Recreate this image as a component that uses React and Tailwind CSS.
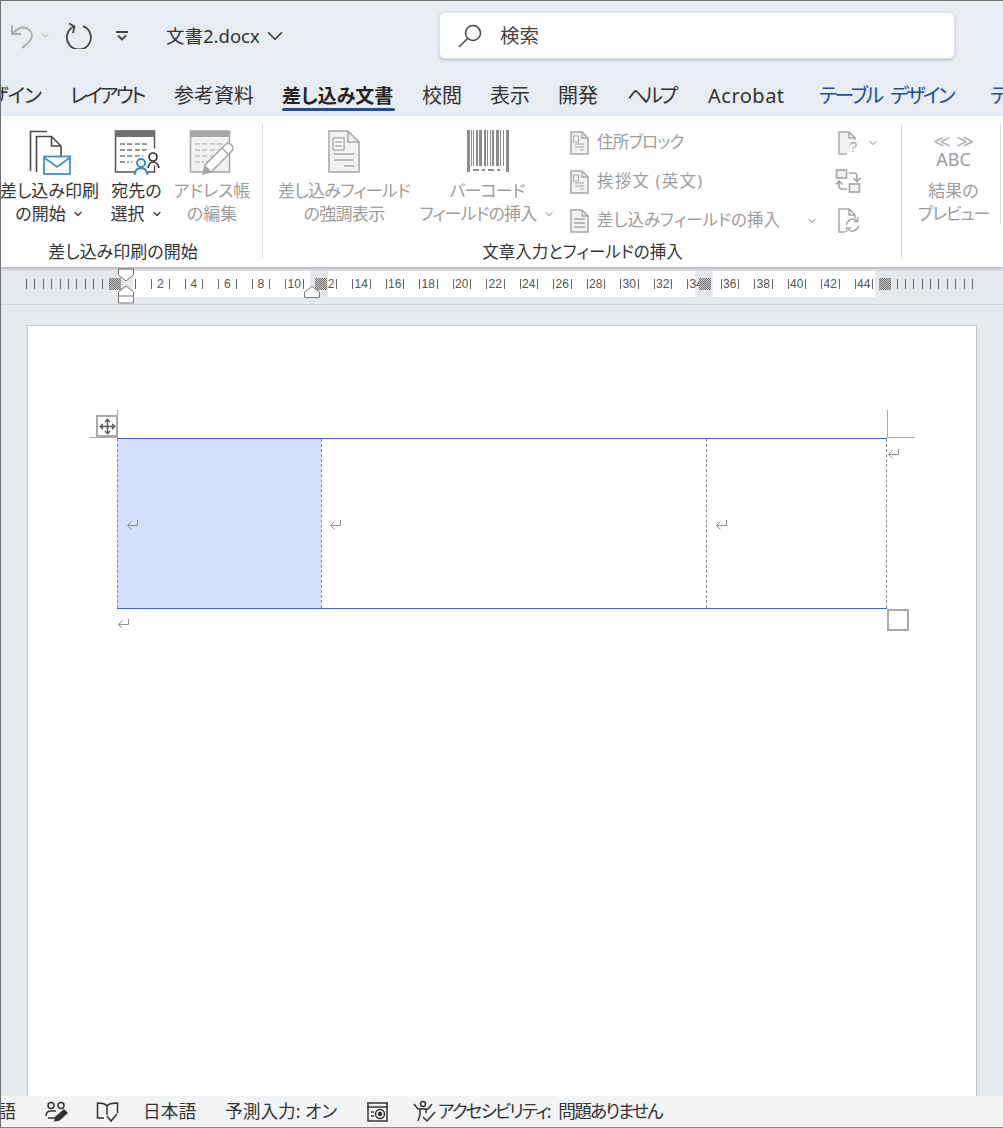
import { ChevronDown, Move } from 'lucide-react';

const TABS = [
    { label: 'ザイン', width: 'w-[40px]', className: 'justify-end tracking-[-1px]' },
    { label: 'レイアウト', width: 'w-[74px]', margin: 'ml-[29px]', className: 'tracking-[-2.7px]' },
    { label: '参考資料', width: 'w-[79px]', margin: 'ml-[30px]' },
    { label: '差し込み文書', width: 'w-[113px]', margin: 'ml-[29px]', active: true, className: 'text-[19px]' },
    { label: '校閲', width: 'w-[39px]', margin: 'ml-[27px]' },
    { label: '表示', width: 'w-[40px]', margin: 'ml-[29px]' },
    { label: '開発', width: 'w-[40px]', margin: 'ml-[28px]' },
    { label: 'ヘルプ', width: 'w-[48px]', margin: 'ml-[29px]', className: 'tracking-[-3px]' },
    { label: 'Acrobat', width: 'w-[76px]', margin: 'ml-[33px]', className: 'tracking-[0.5px]' },
    { label: 'テーブル デザイン', width: 'w-[132px]', margin: 'ml-[35px]', blue: true, className: 'tracking-[-2.6px] [word-spacing:6px]' },
    { label: 'テ', width: 'w-[20px]', margin: 'ml-[39px]', blue: true },
];

const RULER_NUMBERS = [2, 4, 6, 8, 10, 12, 14, 16, 18, 20, 22, 24, 26, 28, 30, 32, 34, 36, 38, 40, 42, 44];
const BAR_WIDTHS = [3, 1, 1, 2, 3, 2, 1, 1, 2, 3, 1, 1, 3];
const BAR_GAPS = [1, 1, 2, 1, 2, 1, 2, 1, 2, 1, 2, 2, 0];

function MailMergeIcon() {
    return (
        <svg width="44" height="46" viewBox="0 0 44 46" fill="none">
            <path d="M19 1.5H2.5V41" stroke="#4a4a4a" strokeWidth="1.6" />
            <path d="M8.5 42V6.5H23.5L33 16V26M23.5 6.5V16H33" stroke="#4a4a4a" strokeWidth="1.6" />
            <rect x="16" y="26.5" width="26" height="17.5" fill="#fff" stroke="#3a93c9" strokeWidth="1.8" />
            <path d="M16 27.5L29 37L42 27.5" stroke="#3a93c9" strokeWidth="1.8" />
        </svg>
    );
}

function TableLines({ color }) {
    return (
        <path d="M6 14H19M21 14H35M6 20H19M21 20H35M6 26H19M21 26H29M6 32H15M17 32H23" stroke={color} strokeWidth="1.4" strokeDasharray="5 2" />
    );
}

function RecipientsIcon() {
    return (
        <svg width="46" height="46" viewBox="0 0 46 46" fill="none">
            <rect x="1.5" y="1" width="39" height="41" fill="#fff" stroke="#555" strokeWidth="1.5" />
            <rect x="1" y="1" width="40" height="6" fill="#707070" />
            <TableLines color="#777" />
            <circle cx="27" cy="35" r="9" fill="#fff" />
            <circle cx="38" cy="27" r="9" fill="#fff" />
            <circle cx="27" cy="33" r="4" stroke="#2e8bc9" strokeWidth="1.8" />
            <path d="M20.5 45C21 40 24 38 27 38C30 38 33 40 33.5 45" stroke="#2e8bc9" strokeWidth="1.8" />
            <circle cx="39" cy="27" r="4" stroke="#333" strokeWidth="1.7" />
            <path d="M34 38C35 33.5 37 32 39 32C41 32 44 33.5 45 38" stroke="#333" strokeWidth="1.7" />
        </svg>
    );
}

function AddressIcon() {
    return (
        <svg width="46" height="46" viewBox="0 0 46 46" fill="none">
            <rect x="1.5" y="1" width="39" height="41" fill="#f2f2f2" stroke="#a6a6a6" strokeWidth="1.5" />
            <rect x="1" y="1" width="40" height="6" fill="#a6a6a6" />
            <TableLines color="#bdbdbd" />
            <path d="M14 44L16 35L36 15C38 13 40.5 13 42.5 15C44.5 17 44.5 19.5 42.5 21.5L22.5 41.5Z" fill="#fff" stroke="#a6a6a6" strokeWidth="1.5" />
            <path d="M14 44L16 35L22.5 41.5Z" fill="#a6a6a6" />
            <path d="M33 18L39.5 24.5" stroke="#a6a6a6" strokeWidth="1.5" />
        </svg>
    );
}

function HighlightIcon() {
    return (
        <svg width="32" height="43" viewBox="0 0 32 43" fill="none">
            <path d="M1 1H20L31 12V42H1Z" fill="#f2f2f2" stroke="#a6a6a6" strokeWidth="1.5" />
            <path d="M20 1V12H31" stroke="#a6a6a6" strokeWidth="1.5" />
            <rect x="5" y="8" width="11" height="12" fill="#fff" stroke="#a6a6a6" strokeWidth="1.3" />
            <path d="M7 12H14M7 16H14M6 24H26M6 30H26M16 36H26" stroke="#a6a6a6" strokeWidth="1.3" />
        </svg>
    );
}

function BarcodeIcon() {
    let x = 0;
    return (
        <svg width="42" height="43" viewBox="0 0 42 43" shapeRendering="crispEdges" className="ml-[2px]">
            {BAR_WIDTHS.map((w, i) => {
                const bar = <rect key={i} x={x} y="0" width={w} height={i === 0 || i === 12 ? 42 : 36} fill="#8c8c8c" />;
                x += w + BAR_GAPS[i];
                return bar;
            })}
            <path d="M6 40H12M15 40H18M21 40H27M30 40H33" stroke="#8c8c8c" strokeWidth="2" />
        </svg>
    );
}

function SmallDocIcon({ variant }) {
    return (
        <svg width="19" height="24" viewBox="0 0 19 24" fill="none">
            <path d="M1 1H12L18 7V23H1Z" fill="#f2f2f2" stroke="#a6a6a6" strokeWidth="1.5" />
            <path d="M12 1V7H18" stroke="#a6a6a6" strokeWidth="1.3" />
            {variant === 'lines' ? (
                <path d="M4 10H15M4 14H15M4 18H15" stroke="#a6a6a6" strokeWidth="1.5" />
            ) : (
                <>
                    <rect x="3.5" y="5" width="5" height="6" stroke="#a6a6a6" />
                    <path d="M5 13H14M5 16H14M10 19H14" stroke="#a6a6a6" />
                </>
            )}
        </svg>
    );
}

function RuleQuestionIcon() {
    return (
        <svg width="22" height="24" viewBox="0 0 22 24" fill="none">
            <path d="M2 2H10V8H16V10H12V22H2Z" fill="#f2f2f2" />
            <path d="M9 23H1V1H11L17 7V9M11 1V7H17" stroke="#a6a6a6" strokeWidth="1.5" />
            <text x="11" y="21" fontSize="15" fill="#a6a6a6" fontFamily="Liberation Sans, sans-serif">?</text>
        </svg>
    );
}

function MatchFieldsIcon() {
    return (
        <svg width="26" height="25" viewBox="0 0 26 25" fill="none" stroke="#a6a6a6" strokeWidth="1.7">
            <rect x="1.5" y="1" width="10" height="8" fill="#f2f2f2" />
            <rect x="14.5" y="15" width="10" height="8" fill="#f2f2f2" />
            <path d="M14 4H19C21 4 22 5 22 7V12M18.5 9L22 12.5L25.5 9" />
            <path d="M12 20H7C5 20 4 19 4 17V13M1 15.5L4 12L7.5 15.5" />
        </svg>
    );
}

function UpdateLabelsIcon() {
    return (
        <svg width="22" height="25" viewBox="0 0 22 25" fill="none" stroke="#a6a6a6">
            <path d="M7 24H1V1H11L17 7V10M11 1V7H17" strokeWidth="1.5" />
            <path d="M8.5 17A6.5 6.5 0 0 1 19.5 13M20.5 18A6.5 6.5 0 0 1 10 21.5" strokeWidth="1.5" />
            <path d="M20 9V13.5H15.5M8.5 24V20H13" strokeWidth="1.3" />
        </svg>
    );
}

function ReturnMark({ className = '' }) {
    return (
        <svg width="13" height="12" viewBox="0 0 13 12" fill="none" stroke="#8e8e8e" className={className}>
            <path d="M11.5 1V6.5H2M5.5 2.5L1.5 6.5L5.5 10.5" strokeWidth="1" />
        </svg>
    );
}

function RibbonButton({ icon, lines, width, disabled, labelClass = '' }) {
    return (
        <div className={`flex flex-col items-center shrink-0 ${width}`}>
            <div className="flex items-start justify-center h-[59px] pt-[10px]">{icon}</div>
            <div className={`text-[17px] leading-[23px] text-center whitespace-nowrap ${disabled ? 'text-[#9c9c9c]' : 'text-[#333]'} ${labelClass}`}>
                {lines.map((line, i) => <div key={i}>{line}</div>)}
            </div>
        </div>
    );
}

function MenuRow({ icon, label, chevron, labelClass = '' }) {
    return (
        <div className="flex items-center h-[39px] text-[16.5px] text-[#9c9c9c] whitespace-nowrap">
            <span className="w-[27px] flex items-center">{icon}</span>
            <span className={labelClass}>{label}</span>
            {chevron && <ChevronDown className="w-[12px] h-[12px] ml-[26px] text-[#777]" strokeWidth={2} />}
        </div>
    );
}

function RulerNumber({ value }) {
    return (
        <div className="w-[33.5px] shrink-0 flex items-center justify-between px-[7.5px]">
            <span className="w-px h-[10px] bg-[#666]" />
            <span className="text-[12px] leading-none text-[#555] font-['Liberation_Sans',sans-serif]">{value}</span>
            <span className="w-px h-[10px] bg-[#666]" />
        </div>
    );
}

function RulerTicks({ className = '' }) {
    return (
        <div className={`flex items-center gap-[7.4px] shrink-0 ${className}`}>
            {Array.from({ length: 10 }, (_, i) => <span key={i} className="w-px h-[10px] bg-[#666]" />)}
        </div>
    );
}

function MarginMark({ className }) {
    return (
        <div className={`absolute top-[11px] h-[12px] w-[12px] bg-[conic-gradient(#777_25%,#c4c4c4_0_50%,#777_0_75%,#c4c4c4_0)] bg-[length:2px_2px] ${className}`} />
    );
}

function HourglassMark() {
    return (
        <svg width="16" height="36" viewBox="0 0 16 36" fill="#fff" stroke="#777" className="absolute left-[117px] top-[1px]">
            <path d="M.5 1H15.5V7L8 13L.5 7Z" />
            <path d="M8 18L15.5 24V35H.5V24Z" />
            <path d="M.5 28H15.5" />
        </svg>
    );
}

export default function App() {
    return (
        <div className="relative w-[1003px] h-[1128px] overflow-hidden flex flex-col bg-[#e8edf3] border-l border-t border-[#6f7275] font-['Noto_Sans','Noto_Sans_CJK_JP',sans-serif] [font-feature-settings:'palt'] text-[#333]">
            {/* Title bar */}
            <div className="h-[71px] pb-[2px] flex items-center shrink-0">
                <svg width="26" height="26" viewBox="0 0 26 26" fill="none" stroke="#a9a9a9" strokeWidth="1.8" className="ml-[9px]">
                    <path d="M2 2V11H11" />
                    <path d="M2 11C7 6 9.5 4.5 13 4.5C18 4.5 22 8 22 12.5C22 15.5 20 18 17.5 20.5L12 25" />
                </svg>
                <ChevronDown className="w-[11px] h-[11px] ml-[4px] text-[#a9a9a9]" strokeWidth={2} />
                <svg width="27" height="27" viewBox="0 0 27 27" fill="none" stroke="#444" strokeWidth="1.8" className="ml-[14px]">
                    <path d="M9 4.5A12 12 0 1 0 18 4.2" />
                    <path d="M4 1.5L9.5 4.5L8 11" />
                </svg>
                <svg width="12" height="10" viewBox="0 0 12 10" fill="none" stroke="#444" strokeWidth="1.8" className="ml-[24px]">
                    <path d="M0 1H12M2 4.5L6 8.5L10 4.5" />
                </svg>
                <span className="ml-[38px] w-[94px] text-[18.5px] text-[#333] whitespace-nowrap">文書2.docx</span>
                <ChevronDown className="w-[26px] h-[26px] ml-[2px] text-[#333]" strokeWidth={1.4} />
                <div className="ml-[151px] w-[516px] h-[47px] bg-white rounded-[6px] border border-[#dfe2e6] shadow-[0_1px_3px_rgba(0,0,0,0.22)] flex items-center">
                    <svg width="24" height="24" viewBox="0 0 24 24" fill="none" stroke="#444" strokeWidth="1.5" className="ml-[18px]">
                        <circle cx="15" cy="9" r="7.5" />
                        <path d="M9.5 14.5L1 23" />
                    </svg>
                    <span className="ml-[18px] text-[19.5px] text-[#444]">検索</span>
                </div>
            </div>

            {/* Tabs */}
            <div className="h-[44px] shrink-0 flex items-start whitespace-nowrap text-[20px] overflow-hidden">
                {TABS.map(tab => (
                    <div
                        key={tab.label}
                        className={`relative flex shrink-0 h-[40px] pt-[7px] leading-[34px] ${tab.width} ${tab.margin || ''} ${tab.className || ''} ${tab.active ? 'font-bold text-[#222]' : ''} ${tab.blue ? 'text-[#1c4f9c]' : ''}`}
                    >
                        {tab.label}
                        {tab.active && <span className="absolute left-0 right-0 bottom-[1px] h-[3px] rounded-full bg-[#1f4e96]" />}
                    </div>
                ))}
            </div>

            {/* Ribbon */}
            <div className="relative h-[151px] shrink-0 bg-white flex shadow-[0_2px_3px_rgba(0,0,0,0.22)] z-10 overflow-hidden">
                <div className="w-[262px] shrink-0 flex flex-col border-r border-[#dcdcdc] my-[8px] h-[134px]">
                    <div className="flex -mt-[4px] flex-1 min-h-0">
                        <RibbonButton width="w-[97px]" icon={<MailMergeIcon />} lines={[<span key="a">差し込み印刷</span>, <span key="b" className="inline-flex items-center">の開始<ChevronDown className="w-[12px] h-[12px] ml-[6px]" strokeWidth={2.4} /></span>]} />
                        <RibbonButton width="w-[77px]" icon={<RecipientsIcon />} lines={[<span key="a">宛先の</span>, <span key="b" className="inline-flex items-center">選択<ChevronDown className="w-[12px] h-[12px] ml-[6px]" strokeWidth={2.4} /></span>]} />
                        <RibbonButton width="w-[74px]" disabled icon={<AddressIcon />} lines={['アドレス帳', 'の編集']} />
                    </div>
                    <div className="text-[17px] leading-[22px] text-center text-[#333] -mb-[5px] pr-[17px]">差し込み印刷の開始</div>
                </div>

                <div className="w-[639px] shrink-0 flex flex-col border-r border-[#dcdcdc] my-[8px] h-[134px]">
                    <div className="flex -mt-[4px] flex-1 min-h-0">
                        <RibbonButton width="w-[130px] ml-[16px]" labelClass="tracking-[-0.7px]" disabled icon={<HighlightIcon />} lines={['差し込みフィールド', 'の強調表示']} />
                        <RibbonButton width="w-[136px] ml-[10px]" labelClass="tracking-[-0.8px]" disabled icon={<BarcodeIcon />} lines={['バーコード', <span key="b" className="inline-flex items-center">フィールドの挿入<ChevronDown className="w-[12px] h-[12px] ml-[6px] text-[#777]" strokeWidth={2} /></span>]} />
                        <div className="ml-[15px] w-[268px] mt-[3px] flex flex-col shrink-0">
                            <MenuRow icon={<SmallDocIcon />} label="住所ブロック" labelClass="tracking-[-0.8px]" />
                            <MenuRow icon={<SmallDocIcon />} label="挨拶文 (英文)" labelClass="tracking-[1.2px]" />
                            <MenuRow icon={<SmallDocIcon variant="lines" />} label="差し込みフィールドの挿入" chevron />
                        </div>
                        <div className="flex flex-col mt-[3px] shrink-0">
                            <div className="h-[39px] flex items-center"><RuleQuestionIcon /><ChevronDown className="w-[12px] h-[12px] ml-[7px] text-[#777]" strokeWidth={2} /></div>
                            <div className="h-[39px] flex items-center -ml-[3px]"><MatchFieldsIcon /></div>
                            <div className="h-[39px] flex items-center"><UpdateLabelsIcon /></div>
                        </div>
                    </div>
                    <div className="text-[16.5px] leading-[22px] text-center text-[#333] -mb-[5px] pl-[1px]">文章入力とフィールドの挿入</div>
                </div>

                <div className="w-[98px] shrink-0 flex flex-col items-center my-[8px] h-[134px] pl-[5px] text-[#9c9c9c]">
                    <div className="h-[59px] -mt-[4px] flex flex-col items-center pt-[13px] leading-none">
                        <span className="text-[17px] font-['DejaVu_Sans',sans-serif] h-[17px] text-[#b0b0b0]">≪ ≫</span>
                        <span className="text-[18px] font-['Noto_Sans',sans-serif] h-[18px]">ABC</span>
                    </div>
                    <div className="text-[17px] leading-[23px] text-center whitespace-nowrap">
                        <div>結果の</div>
                        <div className="tracking-[-1.2px]">プレビュー</div>
                    </div>
                </div>
                <div className="w-px my-[8px] h-[100px] bg-[#dcdcdc] shrink-0" />
            </div>

            {/* Ruler */}
            <div className="relative h-[38px] shrink-0 bg-[#e6e9ed] border-b border-[#d2d5d9] pt-[4px]">
                <div className="flex h-[26px]">
                    <div className="ml-[132px] w-[177px] bg-white" />
                    <div className="ml-[18px] w-[367px] bg-white" />
                    <div className="ml-[18px] w-[162px] bg-white" />
                </div>
                <div className="absolute top-[4px] left-0 right-0 h-[26px] flex items-center">
                    <RulerTicks className="ml-[25px]" />
                    <div className="ml-[32px] w-px h-[10px] bg-[#666]" />
                    <div className="ml-[8px] flex">
                        {RULER_NUMBERS.map(n => <RulerNumber key={n} value={n} />)}
                    </div>
                    <RulerTicks className="ml-[16px]" />
                </div>
                <MarginMark className="left-[108px]" />
                <MarginMark className="left-[314px]" />
                <MarginMark className="left-[698px]" />
                <MarginMark className="left-[878px]" />
                <HourglassMark />
                <svg width="16" height="12" viewBox="0 0 16 12" fill="#fff" stroke="#777" className="absolute left-[303px] top-[19px]">
                    <path d="M.5 11.5V6L8 .5L15.5 6V11.5Z" />
                </svg>
            </div>

            {/* Document */}
            <div className="flex-1 min-h-0 bg-[#e6e9ed] pl-[26px] pt-[20px] overflow-hidden">
                <div className="relative w-[950px] h-[900px] bg-white border border-[#c4c6c9] pl-[89px] pt-[112px]">
                    <div className="relative w-[770px]">
                        <div className="flex h-[171px] border-y border-[#3f62c8]">
                            <div className="w-[204px] bg-[#d3defb] border-l border-dashed border-[#8a8a8a] flex items-center pl-[8px]"><ReturnMark className="mt-[2px]" /></div>
                            <div className="w-[385px] border-l border-dashed border-[#8a8a8a] flex items-center pl-[7px]"><ReturnMark className="mt-[2px]" /></div>
                            <div className="w-[181px] border-x border-dashed border-[#8a8a8a] flex items-center pl-[8px]"><ReturnMark className="mt-[2px]" /></div>
                        </div>
                        <ReturnMark className="mt-[9px]" />

                        {/* table handles */}
                        <div className="absolute -left-[21px] -top-[23px] w-[22px] h-[22px] bg-white border-2 border-[#a9a9a9] flex items-center justify-center">
                            <Move className="w-[17px] h-[17px] text-[#555]" strokeWidth={2} />
                        </div>
                        <span className="absolute -left-[27px] -top-px w-[27px] h-px bg-[#a9a9a9]" />
                        <span className="absolute left-0 -top-[28px] w-px h-[28px] bg-[#a9a9a9]" />
                        <span className="absolute left-[770px] -top-[28px] w-px h-[28px] bg-[#a9a9a9]" />
                        <span className="absolute left-[770px] -top-px w-[28px] h-px bg-[#a9a9a9]" />
                        <ReturnMark className="absolute left-[770px] top-[10px]" />
                        <div className="absolute left-[770px] top-[171px] w-[22px] h-[22px] bg-white border-2 border-[#a9a9a9]" />
                    </div>
                </div>
            </div>

            {/* Status bar */}
            <div className="absolute left-0 right-0 bottom-0 h-[32px] bg-[#f3f4f6] border-b border-[#8a8a8a] flex items-center text-[17.7px] text-[#333] whitespace-nowrap">
                <span className="w-[15px] overflow-hidden flex justify-end">語</span>
                <svg width="23" height="22" viewBox="0 0 23 22" fill="none" stroke="#333" strokeWidth="1.5" className="ml-[29px]">
                    <circle cx="6" cy="4.5" r="3" />
                    <circle cx="16" cy="4.5" r="3" />
                    <path d="M1 15C1 11 3 10 6 10H11M11 17H3" />
                    <path d="M10 19.5L11 16L19 9L22 12L14 19Z" fill="#333" />
                </svg>
                <svg width="23" height="22" viewBox="0 0 23 22" fill="none" stroke="#333" strokeWidth="1.5" className="ml-[28px]">
                    <path d="M11 5C9 2 5 2 1.5 2V17H8M11 5C13 2 17 2 21.5 2V12M11 5V14" />
                    <path d="M11 15L15 20L21 13" />
                </svg>
                <span className="ml-[24px] w-[53px]">日本語</span>
                <span className="ml-[29px] w-[113px]">予測入力: オン</span>
                <svg width="23" height="22" viewBox="0 0 23 22" fill="none" stroke="#333" strokeWidth="1.5" className="ml-[28px]">
                    <path d="M1 2H22M1 6H22M2 2V20H21V2M5 11H8M5 15H8" />
                    <circle cx="14" cy="13" r="4.5" />
                    <circle cx="14" cy="13" r="1.5" fill="#333" />
                </svg>
                <svg width="25" height="24" viewBox="0 0 25 24" fill="none" stroke="#333" strokeWidth="1.5" className="ml-[23px]">
                    <circle cx="11" cy="4" r="2.5" />
                    <path d="M2 4L6 9H16L20 4M8 9V15L6 21M14 9V13" />
                    <path d="M11 17L15 21L23 12" />
                </svg>
                <span className="ml-[1px] tracking-[-1.9px] [word-spacing:6px]">アクセシビリティ: 問題ありません</span>
            </div>
        </div>
    );
}
